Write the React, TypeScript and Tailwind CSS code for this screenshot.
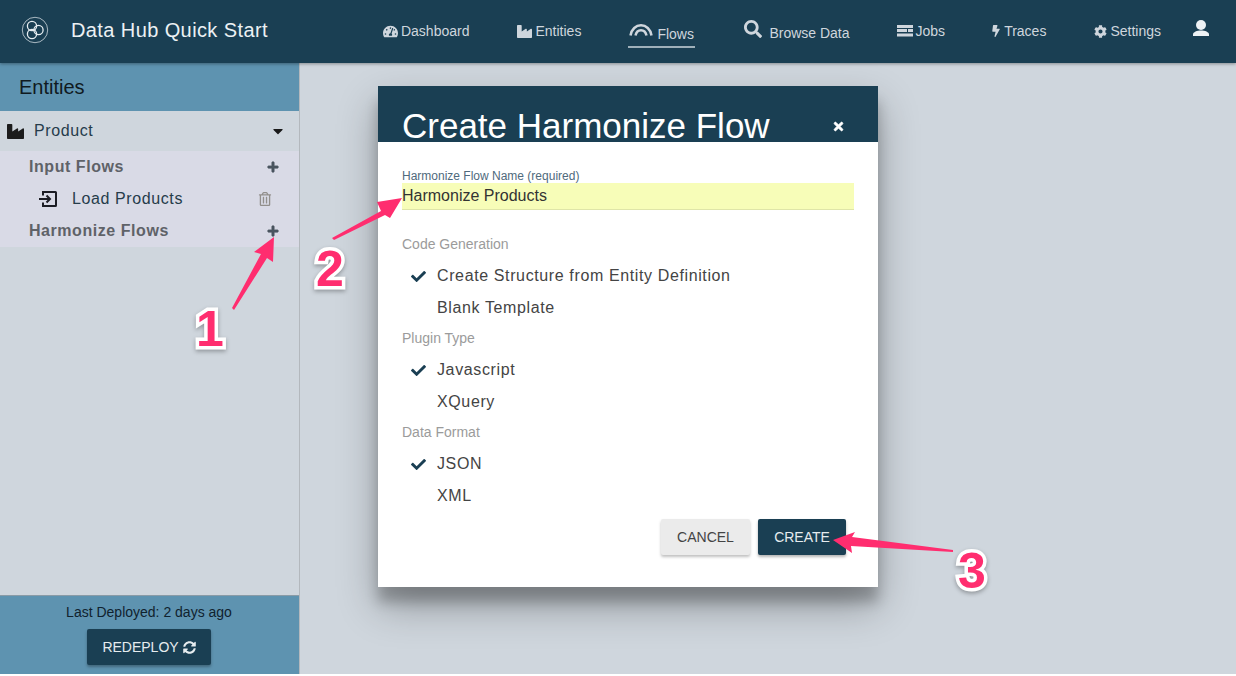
import { FaBolt, FaCaretDown, FaCheck, FaCog, FaIndustry, FaPlus, FaRegTrashAlt, FaSearch, FaSyncAlt, FaTachometerAlt, FaTimes } from "react-icons/fa";

const font = "font-['Liberation_Sans',Arial,sans-serif]";

const Logo = () => (
  <svg width="28" height="28" viewBox="0 0 28 28" fill="none" stroke="#e6edf1">
    <circle cx="14" cy="14" r="12.7" strokeWidth="0.7" />
    <circle cx="11" cy="10" r="4.6" strokeWidth="1.3" />
    <circle cx="11" cy="18" r="4.6" strokeWidth="1.3" />
    <circle cx="17.5" cy="14" r="4.6" strokeWidth="1.3" />
  </svg>
);

const FlowsIcon = () => (
  <svg width="24" height="12" viewBox="0 0 24 12" fill="none" stroke="#cfd6dd" strokeWidth="2.5">
    <path d="M1.500 11.500C2.500 5 7 1.300 12 1.300S21.500 5 22.500 11.500" />
    <path d="M6.500 11.500C7.200 8.200 9 6.200 12 6.200S16.800 8.200 17.500 11.500" />
  </svg>
);

const JobsIcon = () => (
  <svg width="16" height="12" viewBox="0 0 16 12" fill="#cfd6dd">
    <rect width="16" height="3" />
    <rect y="4" width="10" height="3" />
    <rect x="11" y="4" width="5" height="3" />
    <rect y="8.500" width="16" height="3" />
  </svg>
);

const UserIcon = () => (
  <svg width="16" height="16" viewBox="0 0 16 16" fill="#eef2f5">
    <circle cx="8" cy="5" r="5" />
    <path d="M0 16v-1.500C0 12 4 10.500 8 10.500s8 1.500 8 4V16Z" />
  </svg>
);

const InputIcon = () => (
  <svg width="18" height="16" viewBox="0 0 18 16" fill="none" stroke="#1c1c24" strokeWidth="2">
    <path d="M4 4.500V1h12.500a.5.5 0 0 1 .5.500v13a.5.5 0 0 1-.5.500H4v-3.500" />
    <path d="M0 8h11M7.500 4.500 11 8l-3.500 3.500" />
  </svg>
);

function NavItem({ icon, label, className }: { icon: React.ReactNode; label: string; className?: string }) {
  return (
    <a className={`mt-[23px] flex items-center gap-[3px] text-[14px] leading-4 text-[#cfd6dd] ${className ?? ""}`}>
      {icon}
      <span>{label}</span>
    </a>
  );
}

function Header() {
  return (
    <header className="relative z-10 flex h-[63px] items-start bg-[#1a3f53] shadow-[0_1px_3px_rgba(0,0,0,0.35)]">
      <div className="ml-[21px] mt-[16px] flex items-center gap-[22px]">
        <Logo />
        <span className="text-[20px] leading-7 tracking-[0.4px] text-[#ecf1f4]">Data Hub Quick Start</span>
      </div>
      <nav className="ml-auto mr-[27px] flex h-full items-start">
        <NavItem icon={<FaTachometerAlt size={15} />} label="Dashboard" />
        <NavItem className="ml-12" icon={<FaIndustry size={15} />} label="Entities" />
        <div className="ml-[47px] flex h-[48px] w-[67px] flex-col border-b-2 border-[#9fb0ba] pt-[23px] pl-[1px]">
          <div className="flex items-center gap-[4px]">
            <span className="-mt-[5px]"><FlowsIcon /></span>
            <span className="mt-[3px] text-[14px] leading-4 text-[#cfd6dd]">Flows</span>
          </div>
        </div>
        <div className="ml-[49px] mt-[20px] flex items-start gap-[7px]">
          <FaSearch size={18} color="#cfd6dd" />
          <span className="mt-[5px] text-[14px] leading-4 text-[#cfd6dd]">Browse Data</span>
        </div>
        <NavItem className="ml-[47px]" icon={<JobsIcon />} label="Jobs" />
        <NavItem className="ml-[45px]" icon={<FaBolt size={12} className="-mr-[1px]" />} label="Traces" />
        <NavItem className="ml-12" icon={<FaCog size={13} />} label="Settings" />
        <span className="ml-[32px] mt-[20px]"><UserIcon /></span>
      </nav>
    </header>
  );
}

function FlowHeading({ label }: { label: string }) {
  return (
    <div className="flex h-8 items-center justify-between pl-[29px] pr-[20px] text-[16px] font-bold tracking-[0.55px] text-[#5f6268]">
      <span>{label}</span>
      <FaPlus size={12} color="#4a5560" stroke="#4a5560" strokeWidth={30} />
    </div>
  );
}

function Sidebar() {
  return (
    <aside className="flex h-full w-[300px] shrink-0 flex-col border-r border-[#b3b8bd] bg-[#cfd6dd]">
      <div className="flex h-[48px] items-center bg-[#5e93b0] pl-[19px] text-[20px] text-[#101a20]">Entities</div>
      <div className="flex h-[40px] items-center justify-between pl-[7px] pr-[13px] text-[16px] tracking-[0.6px] text-[#263c4b]">
        <span className="flex items-center gap-[10px]">
          <FaIndustry size={17} color="#1c1c1c" />
          Product
        </span>
        <FaCaretDown size={16} color="#1a1a1a" />
      </div>
      <div className="bg-[#d9dae6]">
        <FlowHeading label="Input Flows" />
        <div className="flex h-8 items-center justify-between pb-[1px] pl-[39px] pr-[27px] text-[16px] tracking-[0.6px] text-[#263c4b]">
          <span className="flex items-center gap-[15px]">
            <InputIcon />
            Load Products
          </span>
          <FaRegTrashAlt size={14} color="#928f8c" />
        </div>
        <FlowHeading label="Harmonize Flows" />
      </div>
      <div className="flex-1" />
      <div className="flex h-[79px] flex-col items-center border-t border-[#8a9ba6] bg-[#5e93b0] pr-[1px] pt-[8px]">
        <span className="text-[14px] leading-4 text-[#10222e]">Last Deployed: 2 days ago</span>
        <button className="mt-[9px] flex h-[36px] w-[124px] items-center justify-center gap-1 rounded-[2px] bg-[#1a3f53] text-[14px] text-[#e6ecef] shadow-[0_2px_3px_rgba(0,0,0,0.3)]">
          REDEPLOY <FaSyncAlt size={13} />
        </button>
      </div>
    </aside>
  );
}

function Option({ label, checked }: { label: string; checked?: boolean }) {
  return (
    <div className="flex h-8 items-center text-[16px] tracking-[0.62px] text-[#444]">
      <span className="flex w-[35px] justify-end pr-[11px]">
        {checked && <FaCheck size={15} color="#1a3f53" />}
      </span>
      {label}
    </div>
  );
}

function SectionLabel({ label }: { label: string }) {
  return <div className="flex h-[30px] items-center pb-[2px] text-[14px] text-[#9b9b9b]">{label}</div>;
}

function Modal() {
  return (
    <div className="absolute left-[378px] top-[86px] flex h-[501px] w-[500px] flex-col bg-white shadow-[0_19px_38px_rgba(0,0,0,0.3),0_15px_12px_rgba(0,0,0,0.22)]">
      <div className="flex h-[56px] items-end justify-between bg-[#1a3f53] pl-[24px] pr-[33px]">
        <h2 className="text-[35px] leading-[32px] text-white">Create Harmonize Flow</h2>
        <FaTimes size={13} color="#fff" stroke="#fff" strokeWidth={25} className="mb-[9px]" />
      </div>
      <div className="flex flex-1 flex-col px-[24px]">
        <label className="mt-[28px] text-[12px] leading-[12px] text-[#4f6a7c]">Harmonize Flow Name (required)</label>
        <div className="mt-[1px] flex h-[27px] items-start border-b border-[#dfe5a8] bg-[#f7fdb8] text-[16px] leading-[25px] text-[#333]">
          Harmonize Products
        </div>
        <div className="mt-[20px]">
          <SectionLabel label="Code Generation" />
        </div>
        <Option checked label="Create Structure from Entity Definition" />
        <Option label="Blank Template" />
        <SectionLabel label="Plugin Type" />
        <Option checked label="Javascript" />
        <Option label="XQuery" />
        <SectionLabel label="Data Format" />
        <Option checked label="JSON" />
        <Option label="XML" />
        <div className="mt-[7px] flex justify-end gap-2 pr-[8px]">
          <button className="h-[36px] w-[89px] rounded-[2px] bg-[#ebebeb] text-[14px] text-[#444] shadow-[0_2px_3px_rgba(0,0,0,0.25)]">CANCEL</button>
          <button className="h-[36px] w-[88px] rounded-[2px] bg-[#1a3f53] text-[14px] text-[#e6ecef] shadow-[0_2px_3px_rgba(0,0,0,0.3)]">CREATE</button>
        </div>
      </div>
    </div>
  );
}

function Callout({ n, className }: { n: string; className: string }) {
  return (
    <span className={`absolute z-30 text-[50px] leading-none font-bold text-[#ff2d6f] [-webkit-text-stroke:7px_#fff] [paint-order:stroke_fill] drop-shadow-[0_2px_2px_rgba(0,0,0,0.3)] ${className}`}>
      {n}
    </span>
  );
}

function Annotations() {
  return (
    <>
      <svg className="absolute left-0 top-0 z-20" width="1236" height="676" fill="#ff2d6f">
        <polygon points="274,237 254,252 261,254 232,308 234,310 267,258 273,262" />
        <polygon points="402,198 377,202 381,211 332,238 334,240 385,215 390,218" />
        <polygon points="833,540 855,532 852,537 953,550 953,552 851,546 852,553" />
      </svg>
      <Callout n="1" className="left-[196px] top-[304px]" />
      <Callout n="2" className="left-[316px] top-[244px]" />
      <Callout n="3" className="left-[958px] top-[546px]" />
    </>
  );
}

export default function App() {
  return (
    <div className={`relative flex h-[676px] w-[1236px] flex-col overflow-hidden bg-white ${font}`}>
      <Header />
      <main className="flex h-[611px] bg-[#cfd6dd]">
        <Sidebar />
      </main>
      <Modal />
      <Annotations />
    </div>
  );
}
